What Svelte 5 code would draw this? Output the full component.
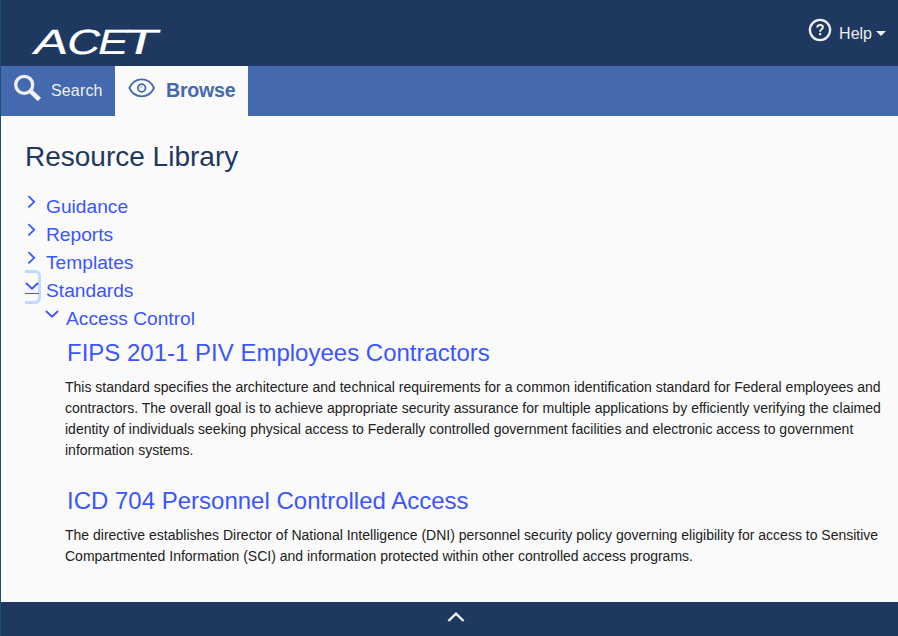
<script>
  const folders = ['Guidance', 'Reports', 'Templates'];
  const documents = [
    {
      title: 'FIPS 201-1 PIV Employees Contractors',
      lines: [
        'This standard specifies the architecture and technical requirements for a common identification standard for Federal employees and',
        'contractors. The overall goal is to achieve appropriate security assurance for multiple applications by efficiently verifying the claimed',
        'identity of individuals seeking physical access to Federally controlled government facilities and electronic access to government',
        'information systems.'
      ]
    },
    {
      title: 'ICD 704 Personnel Controlled Access',
      lines: [
        'The directive establishes Director of National Intelligence (DNI) personnel security policy governing eligibility for access to Sensitive',
        'Compartmented Information (SCI) and information protected within other controlled access programs.'
      ]
    }
  ];
</script>

{#snippet chevron(open)}
  <svg class="chevron" width="14" height="14" viewBox="0 0 14 14">
    <path d={open ? 'M1 4 L7 9.7 L13 4' : 'M3.4 1.2 L9.2 6.8 L3.4 12.4'} />
  </svg>
{/snippet}

<div class="app">
  <header>
    <svg class="logo" width="132" height="28" viewBox="0 0 132 28" aria-label="ACET">
      <text y="25.4" transform="skewX(-14)"><tspan x="8" textLength="34" lengthAdjust="spacingAndGlyphs">A</tspan><tspan x="41" textLength="33" lengthAdjust="spacingAndGlyphs">C</tspan><tspan x="72" textLength="30" lengthAdjust="spacingAndGlyphs">E</tspan><tspan x="97" textLength="35" lengthAdjust="spacingAndGlyphs">T</tspan></text>
    </svg>
    <button class="help">
      <svg width="24" height="24" viewBox="0 0 24 24">
        <circle cx="12" cy="12" r="10.1" />
        <path class="mark" d="M9.2 9.5C9.3 7.9 10.4 7 12.1 7C13.8 7 14.9 7.9 14.9 9.3C14.9 11.4 12.1 11.2 12.1 13.7" />
        <rect x="11" y="15" width="2.2" height="2.2" />
      </svg>
      <span class="help-label">Help</span>
      <span class="caret"></span>
    </button>
  </header>

  <nav>
    <button class="tab search">
      <svg width="28" height="28" viewBox="0 0 28 28">
        <circle cx="11.2" cy="10.8" r="8.5" />
        <path d="M17.2 16.8 L26.4 25.5" />
      </svg>
      <span>Search</span>
    </button>
    <button class="tab browse">
      <svg width="28" height="20" viewBox="0 0 28 20">
        <path d="M1.4 10C4 4.4 8.6 1.4 13.7 1.4S23.4 4.4 26 10C23.4 15.6 18.8 18.3 13.7 18.3S4 15.6 1.4 10Z" />
        <circle cx="13.7" cy="10" r="3.8" />
        <path class="glint" d="M12.4 10.4C12.5 9.3 13.2 8.7 14.2 8.7" />
      </svg>
      <span>Browse</span>
    </button>
  </nav>

  <main>
    <h1>Resource Library</h1>
    <div class="tree">
      {#each folders as folder}
        <div class="node">{@render chevron(false)}<span>{folder}</span></div>
      {/each}
      <div class="node focused">{@render chevron(true)}<span>Standards</span></div>
      <div class="node child">{@render chevron(true)}<span>Access Control</span></div>
    </div>
    {#each documents as doc}
      <article>
        <h2>{doc.title}</h2>
        <p>{#each doc.lines as line}<span>{line}</span>{/each}</p>
      </article>
    {/each}
  </main>

  <footer>
    <svg width="18" height="12" viewBox="0 0 18 12"><path d="M1.4 10 L9 2.6 L16.6 10" /></svg>
  </footer>
</div>

<style>
  .app {
    box-sizing: border-box;
    height: 636px;
    display: flex;
    flex-direction: column;
    overflow: hidden;
    border-left: 1px solid #165372;
    background: #fafafa;
    color: #212121;
    font-family: 'Liberation Sans', Arial, sans-serif;
  }
  svg { display: block; flex: none; fill: none; }
  button {
    border: 0;
    margin: 0;
    padding: 0;
    background: none;
    font: inherit;
    color: inherit;
    display: flex;
  }
  header {
    height: 66px;
    flex: none;
    background: #1f3860;
    display: flex;
    justify-content: space-between;
  }
  .logo { margin: 29px 0 0 29px; overflow: visible; }
  .logo text { fill: #fff; stroke: #fff; stroke-width: 0.2; font-size: 35px; }
  .help { color: #eee; margin: 18px 12px 0 0; align-items: flex-start; }
  .help circle { stroke: #eee; stroke-width: 2.3; }
  .help .mark { stroke: #eee; stroke-width: 2; }
  .help rect { fill: #eee; }
  .help-label { font-size: 16px; line-height: 20px; margin: 6px 0 0 7px; }
  .caret {
    border: 5px solid transparent;
    border-top-color: #eee;
    border-bottom: 0;
    margin: 13px 0 0 4px;
  }
  nav { height: 50px; flex: none; background: #4469ae; display: flex; }
  .tab { height: 50px; }
  .search { width: 114px; color: #f0f0f0; font-size: 16px; }
  .search svg { margin: 8px 0 0 12px; stroke: #f0f0f0; stroke-width: 3.3; }
  .search path { stroke-width: 4.6; }
  .search span { line-height: 20px; margin: 15px 0 0 10px; letter-spacing: 0.15px; }
  .browse { width: 133px; background: #fafafa; color: #4469ae; font-size: 19.6px; font-weight: 700; letter-spacing: -0.25px; }
  .browse svg { margin: 12px 0 0 13px; stroke: #4469ae; stroke-width: 1.8; }
  .browse .glint { stroke-width: 0.8; }
  .browse span { line-height: 24px; margin: 12px 0 0 10px; }
  main { flex: 1; min-height: 0; padding: 25px 0 0 24px; }
  h1 {
    margin: 0 0 20px;
    font-size: 28px;
    line-height: 32px;
    font-weight: 400;
    color: #1f3860;
  }
  .node {
    height: 28px;
    display: flex;
    font-size: 19.2px;
    line-height: 28px;
    color: #3b55ff;
  }
  .node span { margin-left: 7px; }
  .chevron { margin-top: 2px; stroke: #3b55ff; stroke-width: 1.8; }
  .child { padding-left: 20px; }
  .focused { position: relative; }
  .focused::before {
    content: '';
    position: absolute;
    left: 0;
    top: -7px;
    width: 13px;
    height: 28px;
    border: 3px solid #bfdbff;
    border-left: 0;
    border-radius: 0 6px 6px 0;
  }
  .focused .chevron { position: relative; border-bottom: 1px solid #3b55ff; }
  article { margin-left: 40px; height: 148px; }
  h2 {
    margin: 0 0 0 2px;
    padding-top: 5px;
    font-size: 24px;
    line-height: 30px;
    font-weight: 400;
    color: #3b55ff;
  }
  p { margin: 9px 0 0; font-size: 14px; line-height: 21px; }
  p span { display: block; white-space: nowrap; }
  footer {
    height: 34px;
    flex: none;
    background: #1f3860;
    display: flex;
  }
  footer svg { margin: 9px 0 0 446px; stroke: #eee; stroke-width: 2.4; }
</style>
